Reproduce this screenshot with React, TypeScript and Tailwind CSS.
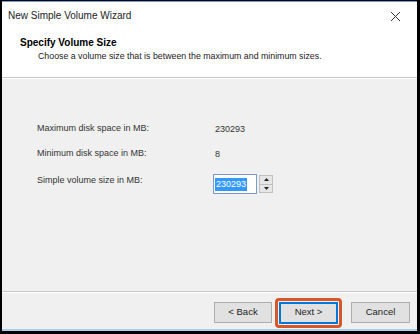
import React from 'react';

const font = { fontFamily: '"Liberation Sans", Arial, sans-serif' };

function Row({ label, children }: { label: string; children: React.ReactNode }) {
  return (
    <div className="flex items-center">
      <div className="w-[178px]">{label}</div>
      {children}
    </div>
  );
}

export default function App() {
  return (
    <div
      className="w-[420px] h-[334px] bg-black pt-[1px] pl-[2px] pr-[3px] pb-[3px] text-[9px] text-[#1a1a1a]"
      style={font}
    >
      <div className="flex flex-col h-full bg-[#f0f0f0] border-t border-b-2 border-t-[#6f9fd0] border-b-[#a8d0ee]">
        {/* title + header */}
        <div className="bg-white h-[76px] border-b border-[#c8c8c8]">
          <div className="flex items-center justify-between pl-[6px] pr-[16px] h-[26px] text-[10px] text-[#222]">
            <span>New Simple Volume Wizard</span>
            <svg width="11" height="11" viewBox="0 0 11 11" className="mt-[2px]">
              <path d="M1 1 L10 10 M10 1 L1 10" stroke="#333" strokeWidth="1" />
            </svg>
          </div>
          <div className="pl-[18px] pt-[9px] font-bold text-[10px] leading-[12px] text-black">Specify Volume Size</div>
          <div className="pl-[36px] pt-[1px] leading-[12px] text-[8.8px]">
            Choose a volume size that is between the maximum and minimum sizes.
          </div>
        </div>
        <div className="h-[1px] bg-white" />

        {/* body */}
        <div className="flex-1 flex flex-col pl-[35px] pt-[43px] gap-[11px] text-[#333]">
          <Row label="Maximum disk space in MB:">
            <span className="leading-[14px]">230293</span>
          </Row>
          <Row label="Minimum disk space in MB:">
            <span className="leading-[14px]">8</span>
          </Row>
          <div className="flex items-center mt-[2px]">
            <div className="w-[176px] pb-[6px]">Simple volume size in MB:</div>
            <div className="flex items-center gap-[2px]">
              <div className="w-[44px] h-[20px] bg-white border border-[#7a9cc6] flex items-center pl-[1px]">
                <span className="bg-[#3399ff] text-white leading-[13px] px-[1px] text-[9px]">230293</span>
              </div>
              <div className="flex flex-col w-[14px] h-[18px] border border-[#c0c0c0] bg-[#e6e6e6]">
                <div className="flex-1 flex items-center justify-center border-b border-[#c0c0c0]">
                  <svg width="5" height="3" viewBox="0 0 5 3"><path d="M0 3 L2.5 0 L5 3 Z" fill="#222" /></svg>
                </div>
                <div className="flex-1 flex items-center justify-center">
                  <svg width="5" height="3" viewBox="0 0 5 3"><path d="M0 0 L2.5 3 L5 0 Z" fill="#222" /></svg>
                </div>
              </div>
            </div>
          </div>
        </div>

        {/* footer */}
        <div className="h-[1px] bg-[#c8c8c8]" />
        <div className="h-[1px] bg-white" />
        <div className="h-[36px] flex items-center justify-end pr-[7px] pt-[3px] text-[9.5px] text-[#222]">
          <button className="w-[58px] h-[21px] bg-[#e1e1e1] border border-[#adadad]">&lt; Back</button>
          <div className="ml-[3px] p-[1px] border-[3px] border-[#d5572a] rounded-[4px]">
            <button className="w-[59px] h-[22px] bg-[#e1e1e1] border-2 border-[#0078d7] block">Next &gt;</button>
          </div>
          <button className="ml-[9px] w-[59px] h-[21px] bg-[#e1e1e1] border border-[#adadad]">Cancel</button>
        </div>
      </div>
    </div>
  );
}
